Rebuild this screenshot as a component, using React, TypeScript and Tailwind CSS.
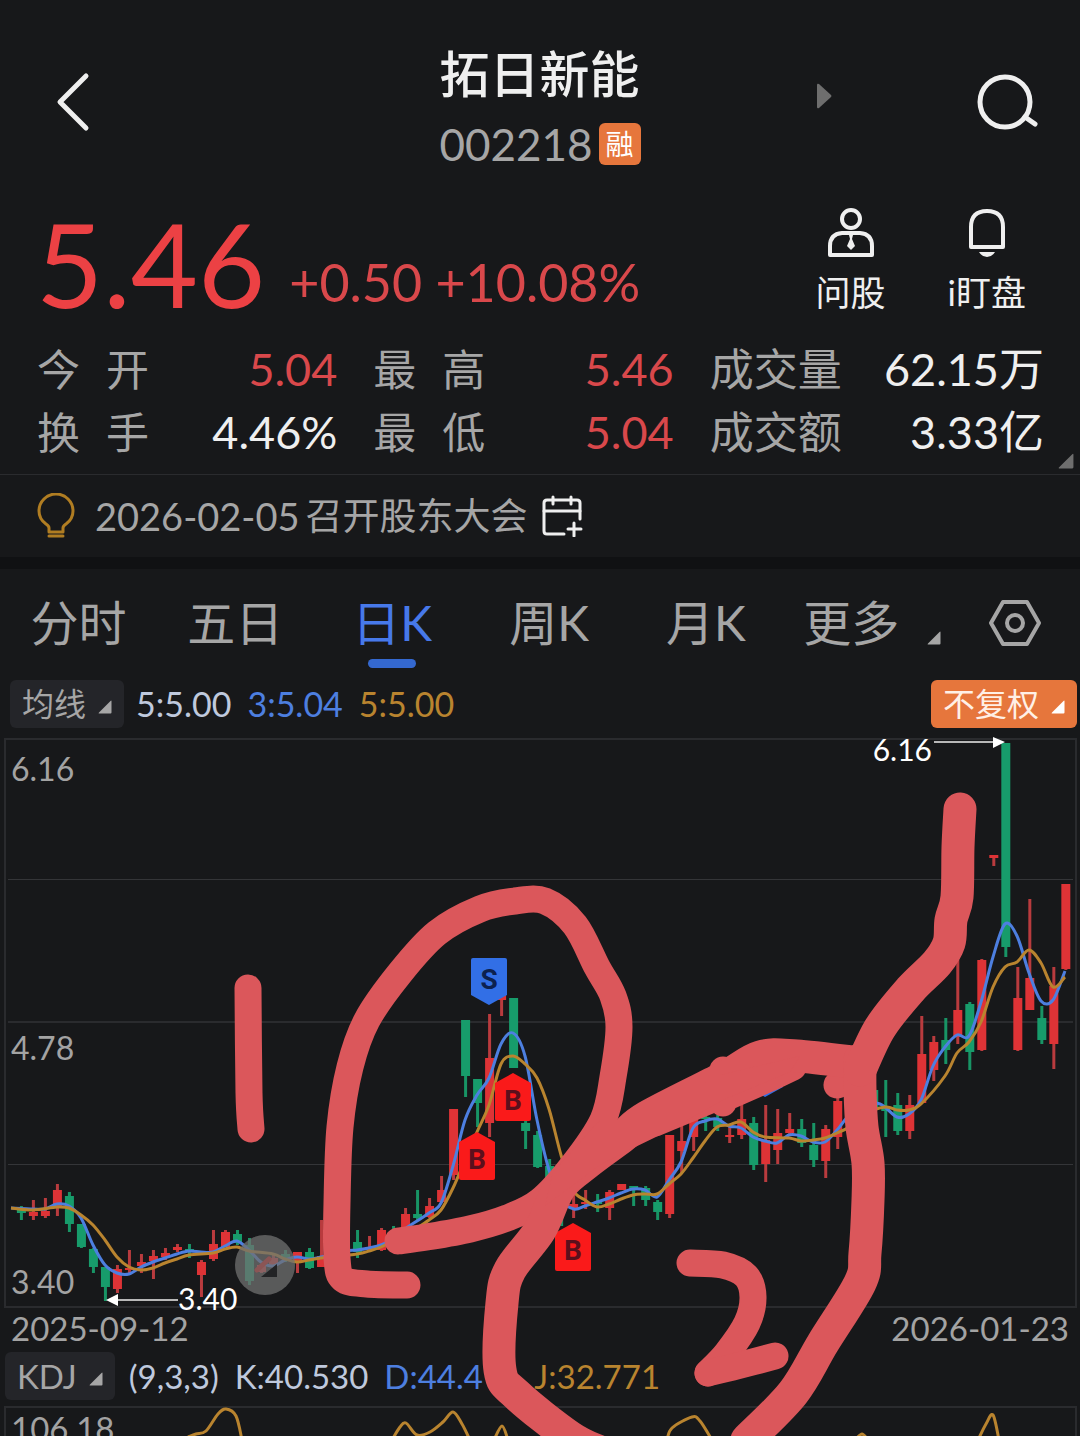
import React from "react";

type Candle = [number, "r" | "g", number, number, number, number];
type Point = [number, number];

// index, direction, high, body top, body bottom, low
const candles: Candle[] = [
  [0, "g", 1206, 1210, 1213, 1220], [1, "r", 1200, 1212, 1216, 1220], [2, "r", 1198, 1211, 1216, 1218],
  [3, "r", 1184, 1190, 1207, 1216], [4, "g", 1192, 1196, 1224, 1232], [5, "g", 1224, 1224, 1247, 1248],
  [6, "g", 1248, 1249, 1267, 1273], [7, "g", 1267, 1267, 1287, 1301], [8, "r", 1265, 1269, 1289, 1293],
  [9, "r", 1250, 1268, 1270, 1275], [10, "r", 1254, 1262, 1266, 1273], [11, "r", 1250, 1256, 1261, 1279],
  [12, "r", 1248, 1253, 1257, 1260], [13, "r", 1244, 1247, 1250, 1252], [14, "g", 1244, 1249, 1252, 1258],
  [15, "r", 1260, 1262, 1275, 1297], [16, "r", 1230, 1244, 1259, 1261], [17, "r", 1230, 1232, 1247, 1247],
  [18, "g", 1230, 1234, 1243, 1245], [19, "g", 1238, 1245, 1281, 1285], [20, "r", 1264, 1265, 1272, 1273],
  [21, "r", 1254, 1258, 1266, 1275], [22, "g", 1250, 1254, 1259, 1262], [23, "r", 1252, 1252, 1262, 1273],
  [24, "g", 1248, 1252, 1268, 1269], [25, "r", 1220, 1256, 1267, 1267], [28, "g", 1230, 1242, 1252, 1258],
  [29, "r", 1236, 1247, 1250, 1252], [30, "r", 1228, 1230, 1250, 1251], [31, "g", 1226, 1235, 1245, 1246],
  [32, "r", 1208, 1214, 1228, 1230], [33, "g", 1190, 1214, 1218, 1220], [34, "r", 1198, 1206, 1217, 1218],
  [35, "r", 1176, 1190, 1202, 1203], [36, "r", 1109, 1109, 1175, 1180], [37, "g", 1020, 1020, 1076, 1097],
  [38, "g", 1079, 1079, 1103, 1127], [39, "r", 1014, 1058, 1123, 1137], [40, "r", 985, 990, 1000, 1016],
  [41, "g", 998, 998, 1068, 1068], [42, "g", 1118, 1123, 1131, 1149], [43, "g", 1131, 1135, 1167, 1168],
  [44, "g", 1159, 1166, 1186, 1190], [45, "g", 1186, 1190, 1208, 1226], [46, "r", 1195, 1204, 1208, 1218],
  [47, "r", 1190, 1202, 1204, 1209], [48, "g", 1194, 1202, 1204, 1212], [49, "r", 1190, 1192, 1208, 1220],
  [50, "r", 1184, 1184, 1190, 1190], [51, "g", 1186, 1186, 1189, 1206], [52, "g", 1186, 1188, 1200, 1206],
  [53, "g", 1200, 1202, 1212, 1220], [54, "r", 1135, 1135, 1214, 1218], [55, "r", 1120, 1141, 1151, 1173],
  [56, "r", 1117, 1117, 1137, 1151], [57, "g", 1112, 1117, 1119, 1131], [58, "g", 1115, 1118, 1127, 1131],
  [59, "r", 1125, 1135, 1137, 1143], [60, "r", 1100, 1119, 1135, 1139], [61, "g", 1117, 1123, 1165, 1170],
  [62, "r", 1105, 1140, 1164, 1182], [63, "r", 1109, 1133, 1150, 1164], [64, "r", 1113, 1129, 1133, 1135],
  [65, "g", 1119, 1129, 1143, 1147], [66, "g", 1123, 1145, 1160, 1167], [67, "r", 1125, 1129, 1161, 1178],
  [68, "r", 1097, 1101, 1137, 1149], [71, "g", 1085, 1090, 1110, 1116], [72, "g", 1080, 1108, 1111, 1137],
  [73, "g", 1093, 1105, 1131, 1135], [74, "r", 1095, 1105, 1131, 1139], [75, "r", 1016, 1054, 1103, 1103],
  [76, "r", 1036, 1042, 1070, 1081], [77, "g", 1018, 1040, 1050, 1064], [78, "r", 960, 1010, 1037, 1044],
  [79, "g", 1002, 1004, 1052, 1070], [80, "r", 959, 960, 1050, 1051], [81, "r", 855, 855, 858, 866],
  [82, "g", 743, 743, 947, 957], [83, "r", 967, 998, 1050, 1051], [84, "r", 899, 978, 1010, 1010],
  [85, "g", 1006, 1018, 1040, 1044], [86, "r", 967, 986, 1044, 1069], [87, "r", 884, 884, 969, 970],
];

const blueLine: Point[] = [
  [11, 1208], [33, 1209], [45, 1209], [57, 1204], [69, 1206], [81, 1218], [93, 1245], [105, 1265], [117, 1273],
  [129, 1274], [141, 1267], [153, 1262], [165, 1258], [177, 1254], [189, 1251], [201, 1252], [213, 1252],
  [225, 1246], [237, 1241], [249, 1250], [261, 1262], [273, 1266], [285, 1260], [297, 1257], [309, 1259],
  [321, 1257], [345, 1251], [357, 1250], [369, 1248], [381, 1245], [393, 1239], [405, 1229], [417, 1221],
  [429, 1213], [441, 1203], [453, 1166], [465, 1120], [477, 1095], [489, 1078], [501, 1044], [513, 1033],
  [525, 1056], [537, 1120], [549, 1170], [561, 1200], [574, 1209], [585, 1206], [597, 1202], [609, 1198],
  [621, 1193], [633, 1189], [645, 1190], [657, 1197], [669, 1180], [681, 1162], [693, 1128], [705, 1121],
  [717, 1119], [729, 1126], [741, 1128], [753, 1137], [765, 1141], [777, 1143], [789, 1135], [801, 1136],
  [813, 1142], [825, 1142], [837, 1130], [849, 1115], [861, 1105], [880, 1104], [897, 1117], [909, 1114],
  [921, 1100], [933, 1066], [945, 1047], [957, 1035], [969, 1036], [981, 1002], [993, 957], [1005, 924],
  [1017, 936], [1029, 973], [1041, 1001], [1053, 1000], [1065, 971],
];

const orangeLine: Point[] = [
  [11, 1208], [33, 1210], [57, 1207], [69, 1208], [81, 1215], [93, 1225], [105, 1240], [117, 1257], [129, 1267],
  [141, 1270], [153, 1268], [165, 1263], [177, 1259], [189, 1255], [213, 1253], [225, 1249], [237, 1247],
  [249, 1251], [273, 1254], [285, 1259], [297, 1262], [309, 1260], [321, 1258], [357, 1254], [369, 1251],
  [381, 1247], [405, 1235], [417, 1228], [429, 1220], [441, 1210], [453, 1188], [465, 1160], [477, 1132],
  [489, 1105], [501, 1064], [513, 1056], [525, 1064], [537, 1078], [549, 1109], [561, 1155], [573, 1190],
  [585, 1200], [597, 1207], [609, 1204], [621, 1199], [633, 1195], [645, 1194], [657, 1194], [669, 1184],
  [681, 1174], [693, 1158], [705, 1141], [717, 1127], [729, 1125], [741, 1122], [753, 1132], [765, 1137],
  [789, 1138], [801, 1141], [813, 1140], [825, 1138], [837, 1133], [849, 1127], [861, 1115], [885, 1107],
  [897, 1110], [909, 1110], [921, 1104], [945, 1076], [957, 1053], [969, 1042], [981, 1022], [993, 987],
  [1005, 967], [1017, 962], [1029, 950], [1041, 963], [1053, 987], [1065, 977],
];

// Hand-drawn marker strokes
const loopOne: Point[] = [
  [407, 1285], [367, 1284], [343, 1279], [337, 1258], [337, 1203], [340, 1127], [350, 1067], [367, 1020],
  [400, 973], [437, 933], [480, 909], [515, 901], [545, 901], [575, 925], [597, 967], [613, 996], [619, 1027],
  [613, 1077], [603, 1120], [573, 1165], [540, 1201], [507, 1218], [470, 1229], [427, 1237], [398, 1241],
];
const loopTwo: Point[] = [
  [860, 1063], [797, 1056], [760, 1057], [723, 1078], [647, 1117], [622, 1137], [587, 1163], [560, 1187],
  [540, 1230], [510, 1270], [502, 1303], [500, 1370], [517, 1395], [570, 1437], [600, 1452],
];
const loopTwoRight: Point[] = [
  [860, 1060], [860, 1090], [862, 1127], [868, 1163], [868, 1200], [865, 1253], [860, 1283], [823, 1343],
  [793, 1393], [747, 1440],
];
const tail: Point[] = [
  [860, 1070], [880, 1028], [910, 990], [937, 963], [949, 943], [951, 920], [957, 897], [958, 847], [960, 809],
];
const digitOne: Point[] = [[248, 988], [249, 1093], [251, 1129]];
const digitTwoTop: Point[] = [[690, 1263], [723, 1265], [746, 1276], [753, 1297], [747, 1323], [727, 1353], [708, 1373]];
const digitTwoBase: Point[] = [[708, 1373], [737, 1366], [775, 1356]];

const oscillator: Point[][] = [
  [[188, 1437], [196, 1434], [206, 1431], [218, 1414], [226, 1409], [236, 1416], [242, 1440]],
  [[392, 1440], [400, 1427], [406, 1423], [417, 1435], [430, 1432], [443, 1422], [453, 1412], [462, 1424], [470, 1440]],
  [[494, 1440], [502, 1426], [508, 1440]],
  [[667, 1440], [672, 1428], [692, 1417], [700, 1421], [712, 1440]],
  [[855, 1440], [862, 1434], [868, 1440]],
  [[978, 1440], [986, 1424], [993, 1415], [999, 1440]],
];

function smooth(points: Point[]): string {
  let d = `M${points[0][0]} ${points[0][1]}`;
  for (let i = 0; i < points.length - 1; i++) {
    const a = points[i - 1] ?? points[i];
    const b = points[i];
    const c = points[i + 1];
    const e = points[i + 2] ?? c;
    d += `C${b[0] + (c[0] - a[0]) / 6} ${b[1] + (c[1] - a[1]) / 6} ${c[0] - (e[0] - b[0]) / 6} ${c[1] - (e[1] - b[1]) / 6} ${c[0]} ${c[1]}`;
  }
  return d;
}

function Corner({ className }: { className: string }) {
  return (
    <svg viewBox="0 0 14 14" className={className} aria-hidden="true">
      <path d="M1 13.500H12.500Q13.500 13.500 13.500 12.500V1.500Q13.500 0 12.500 1L1 12.500Q0 13.500 1 13.500Z" fill="currentColor" />
    </svg>
  );
}

function BuyMarker({ x, y }: { x: number; y: number }) {
  return (
    <g>
      <path d={`M${x} ${y}L${x + 18} ${y + 10}V${y + 46}Q${x + 18} ${y + 48} ${x + 16} ${y + 48}H${x - 16}Q${x - 18} ${y + 48} ${x - 18} ${y + 46}V${y + 10}Z`} fill="#fa1a1a" />
      <text x={x} y={y + 37} textAnchor="middle" fill="#5c0f1c" className="font-[Roboto,sans-serif] text-[28px] font-bold">B</text>
    </g>
  );
}

function SellMarker({ x, y }: { x: number; y: number }) {
  return (
    <g>
      <path d={`M${x} ${y + 47}L${x + 18} ${y + 37}V${y + 2}Q${x + 18} ${y} ${x + 16} ${y}H${x - 16}Q${x - 18} ${y} ${x - 18} ${y + 2}V${y + 37}Z`} fill="#326fe6" />
      <text x={x} y={y + 31} textAnchor="middle" fill="#0c2150" className="font-[Roboto,sans-serif] text-[28px] font-bold">S</text>
    </g>
  );
}

function PriceChart() {
  return (
    <svg viewBox="0 738 1080 614" className="block w-full overflow-visible" role="img" aria-label="日K">
      <g stroke="#2a2b2e" strokeWidth="2" fill="none">
        <rect x="5" y="739" width="1071" height="568" />
        <path d="M8 1022H1073" />
        <path d="M8 879.500H1073M8 1164.500H1073" stroke="#343538" strokeWidth="1" />
      </g>
      <g fill="#a3a3a3" className="text-[32px]">
        <text x="11" y="781">6.16</text>
        <text x="11" y="1060">4.78</text>
        <text x="11" y="1294">3.40</text>
      </g>
      <g fill="#a3a3a3" className="text-[33px]">
        <text x="11" y="1341">2025-09-12</text>
        <text x="1069" y="1341" textAnchor="end">2026-01-23</text>
      </g>
      {candles.map(([i, dir, high, top, bottom, low]) => {
        const x = 21.4 + i * 12.005;
        return (
          <g key={i}>
            <rect x={x - 1.5} y={high} width="3" height={low - high} fill={dir === "r" ? "#b93b3e" : "#189465"} />
            <rect x={x - 4.5} y={top} width="9" height={bottom - top} fill={dir === "r" ? "#de3336" : "#179c6b"} />
          </g>
        );
      })}
      <path d={smooth(blueLine)} fill="none" stroke="#4d7fe0" strokeWidth="3" />
      <path d={smooth(orangeLine)} fill="none" stroke="#b9842f" strokeWidth="3" />
      <g fill="#ffffff" className="text-[30px]">
        <path d="M934 742H995" stroke="#b8b8b8" strokeWidth="2" />
        <path d="M993 737L1005 742L993 748Z" />
        <text x="932" y="761" textAnchor="end">6.16</text>
        <path d="M117 1300H178" stroke="#b8b8b8" strokeWidth="2" />
        <path d="M106 1300L118 1294V1306Z" />
        <text x="178" y="1310">3.40</text>
      </g>
      <SellMarker x={489} y={958} />
      <SellMarker x={765} y={1050} />
      <BuyMarker x={513} y={1073} />
      <BuyMarker x={477} y={1132} />
      <BuyMarker x={573} y={1223} />
      <circle cx="265" cy="1265" r="30" fill="#707070" fillOpacity="0.75" />
      <path d="M277 1264V1277H261Z" fill="#222325" />
      <path d="M257 1270L269 1259" stroke="#8b5555" strokeWidth="5" strokeLinecap="round" />
    </svg>
  );
}

function Annotations() {
  return (
    <svg viewBox="0 738 1080 698" className="pointer-events-none absolute inset-x-0 top-0 block w-full overflow-hidden" aria-hidden="true">
      <g fill="none" stroke="#db575b" strokeWidth="27" strokeLinecap="round" strokeLinejoin="round">
        <path d={smooth(digitOne)} />
        <path d={smooth(loopOne)} />
        <path d={smooth(digitTwoTop)} />
        <path d={smooth(digitTwoBase)} />
        <path d="M723 1070V1103M720 1096L655 1123M725 1098L770 1078L793 1067M837 1085L860 1075" />
        <g strokeWidth="33">
          <path d={smooth(loopTwo)} />
          <path d={smooth(loopTwoRight)} />
          <path d={smooth(tail)} />
        </g>
      </g>
      <path d="M553 1172L600 1120L630 1120L720 1075L800 1056L790 1072L723 1100L660 1135L625 1152L600 1165L545 1206Z" fill="#db575b" />
    </svg>
  );
}

const stats: { label: string; value: string; tone: string }[] = [
  { label: "今 开", value: "5.04", tone: "text-[#d9484b]" },
  { label: "最 高", value: "5.46", tone: "text-[#d9484b]" },
  { label: "成交量", value: "62.15万", tone: "text-[#efefef]" },
  { label: "换 手", value: "4.46%", tone: "text-[#efefef]" },
  { label: "最 低", value: "5.04", tone: "text-[#d9484b]" },
  { label: "成交额", value: "3.33亿", tone: "text-[#efefef]" },
];

const tabs = ["分时", "五日", "日K", "周K", "月K"];

export default function App() {
  return (
    <main className="w-full overflow-hidden bg-[#17181a] font-['Lato','Noto_Sans_CJK_SC',sans-serif] text-[#a6a6a6]">
      <header className="flex items-center justify-between px-10 pt-10">
        <div className="flex flex-1 pb-4">
          <button type="button" aria-label="返回" className="ml-4">
            <svg viewBox="0 0 36 60" className="h-15 w-9" fill="none" stroke="#efefef" strokeWidth="5" strokeLinecap="round" strokeLinejoin="round">
              <path d="M30 4L4 30L30 56" />
            </svg>
          </button>
        </div>
        <div>
          <h1 className="text-[50px] leading-[68px] font-medium text-[#efefef]">拓日新能</h1>
          <div className="flex items-center gap-1.5">
            <span className="text-[44px] leading-[72px]">002218</span>
            <span className="flex size-[42px] items-center justify-center rounded-md bg-[#e6763c] text-[28px] leading-none text-white">融</span>
          </div>
        </div>
        <div className="flex flex-1 items-center justify-end gap-36 pb-4">
          <button type="button" aria-label="下一只" className="mb-3">
            <svg viewBox="0 0 16 26" className="h-[26px] w-4" fill="#6e6e6e">
              <path d="M1 2Q1 0 3 1L15 12Q16 13 15 14L3 25Q1 26 1 24Z" />
            </svg>
          </button>
          <button type="button" aria-label="搜索">
            <svg viewBox="0 0 64 60" className="h-15 w-16" fill="none" stroke="#efefef" strokeWidth="5" strokeLinecap="round">
              <circle cx="29" cy="30" r="25" />
              <path d="M49 45L59 52" />
            </svg>
          </button>
        </div>
      </header>

      <section className="flex items-end justify-between pt-[18px] pr-[54px] pl-9">
        <div className="flex items-end gap-6">
          <span className="text-[116px] leading-[132px] text-[#ec4144]">5.46</span>
          <span className="pb-[18px] text-[52px] leading-[60px] text-[#d9484b]">+0.50 +10.08%</span>
        </div>
        <div className="flex gap-[62px] pb-4 text-[35px] leading-[44px] text-[#efefef]">
          <button type="button" className="flex flex-col items-center gap-3">
            <svg viewBox="0 0 48 50" className="h-[50px] w-12" fill="none" stroke="#efefef" strokeWidth="4" strokeLinejoin="round">
              <circle cx="24" cy="11" r="9" />
              <path d="M15 25H33Q45 26 45 38V47H3V38Q3 26 15 25Z" />
              <path d="M22 27H26L25 31L28 38L24 42L20 38L23 31Z" fill="#efefef" stroke="none" />
            </svg>
            问股
          </button>
          <button type="button" className="flex flex-col items-center gap-3">
            <svg viewBox="0 0 40 50" className="h-[50px] w-10" fill="none" stroke="#efefef" strokeWidth="4" strokeLinejoin="round">
              <path d="M4 19Q4 3 20 3Q36 3 36 19V39H4Z" />
              <path d="M12 44H28Q25 49 20 49Q15 49 12 44Z" fill="#efefef" stroke="none" />
            </svg>
            i盯盘
          </button>
        </div>
      </section>

      <section className="relative border-b border-[#2a2b2e] pt-2 pr-9 pb-2.5 pl-[37px]">
        <dl className="grid grid-cols-[300fr_300fr_334fr] gap-x-9">
          {stats.map((s) => (
            <div key={s.label} className="flex items-center justify-between leading-[63px] whitespace-nowrap">
              <dt className="flex w-[112px] justify-between text-[43px]">
                {s.label.includes(" ") ? s.label.split(" ").map((c) => <span key={c}>{c}</span>) : <span className="text-[44px]">{s.label}</span>}
              </dt>
              <dd className={`${s.tone} text-[45px]`}>{s.value}</dd>
            </div>
          ))}
        </dl>
        <Corner className="absolute right-[6px] bottom-[5px] size-4 text-[#6e6e6e]" />
      </section>

      <section className="flex h-[82px] items-center pl-[37px]">
        <svg viewBox="0 0 38 46" className="h-[46px] w-[38px]" fill="none" stroke="#b07d22" strokeWidth="3" strokeLinejoin="round">
          <path d="M12 39V35Q12 33 9 31Q2 26 2 18A17 17 0 0 1 36 18Q36 26 29 31Q26 33 26 35V39Z" />
          <path d="M12 43H26" strokeLinecap="round" />
        </svg>
        <a href="#meeting" className="ml-5 flex items-center gap-1.5 text-[37px] leading-[54px]">
          <span className="text-[38px]">2026-02-05</span>
          <span>召开股东大会</span>
        </a>
        <button type="button" aria-label="添加日程" className="ml-3.5">
          <svg viewBox="0 0 42 42" className="size-[42px]" fill="none" stroke="#efefef" strokeWidth="3" strokeLinecap="round" strokeLinejoin="round">
            <path d="M22 39H5Q2 39 2 36V8Q2 5 5 5H35Q38 5 38 8V24" />
            <path d="M2 16H38M11 2V9M29 2V9M32 28V41M26 34H39" />
          </svg>
        </button>
      </section>
      <div className="h-3 bg-[#101113]" />

      <nav className="flex h-[111px] items-start pt-5 text-[48px] leading-[68px]">
        {tabs.map((t) => (
          <button
            key={t}
            type="button"
            aria-current={t === "日K" ? "page" : undefined}
            className={t === "日K" ? "flex flex-[6] flex-col items-center text-[#4779ea]" : "flex flex-[6] flex-col items-center"}
          >
            {t}
            {t === "日K" && <span className="mt-0.5 h-[9px] w-12 rounded-full bg-[#3468cf]" />}
          </button>
        ))}
        <button type="button" className="flex flex-[6] items-end justify-end gap-7">
          更多
          <Corner className="mb-3 size-3.5" />
        </button>
        <button type="button" aria-label="设置" className="flex flex-[5] justify-center pt-2.5 pl-2">
          <svg viewBox="0 0 52 48" className="h-12 w-[52px]" fill="none" stroke="#a6a6a6" strokeWidth="4" strokeLinejoin="round">
            <path d="M14 3H38L50 24L38 45H14L2 24Z" />
            <circle cx="26" cy="24" r="8" />
          </svg>
        </button>
      </nav>

      <section className="flex h-12 items-center gap-4 pr-[3px] pl-2.5 text-[34px] leading-[52px]">
        <button type="button" className="-mr-1 flex h-12 items-center gap-3 rounded-md bg-[#242529] px-3 text-[32px]">
          均线
          <Corner className="mt-1.5 size-3.5" />
        </button>
        <span className="text-[#bfc9dd]">5:5.00</span>
        <span className="text-[#4d7fe0]">3:5.04</span>
        <span className="text-[#b9842f]">5:5.00</span>
        <button type="button" className="ml-auto flex h-12 items-center gap-3 rounded-md bg-[#e6763c] px-3 text-[32px] text-[#fff0e6]">
          不复权
          <Corner className="mt-1.5 size-3.5 text-white" />
        </button>
      </section>

      <section className="relative mt-2.5">
        <PriceChart />
        <div className="flex h-12 items-center gap-4 pl-[5px] text-[33px] leading-[48px]">
          <button type="button" className="-mr-0.5 flex h-12 items-center gap-3 rounded-md bg-[#242529] px-3">
            KDJ
            <Corner className="mt-1.5 size-3.5" />
          </button>
          <span className="text-[#bfc9dd]">(9,3,3)</span>
          <span className="text-[#bfc9dd]">K:40.530</span>
          <span className="w-[134px] text-[#4d7fe0]">D:44.4</span>
          <span className="text-[#b9842f]">J:32.771</span>
        </div>
        <svg viewBox="0 1400 1080 36" className="block w-full" role="img" aria-label="KDJ">
          <path d="M5 1440V1407H1076V1440" fill="none" stroke="#2a2b2e" strokeWidth="2" />
          <text x="11" y="1441" fill="#a3a3a3" className="text-[33px]">106.18</text>
          {oscillator.map((line) => (
            <path key={line[0][0]} d={smooth(line)} fill="none" stroke="#b9842f" strokeWidth="3" />
          ))}
        </svg>
        <Annotations />
      </section>
    </main>
  );
}
